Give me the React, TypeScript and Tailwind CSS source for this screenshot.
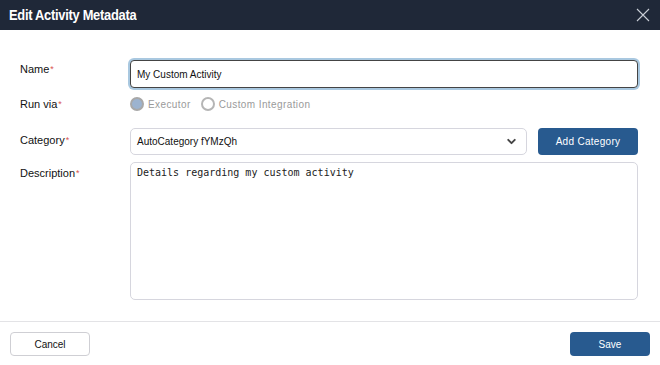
import { ChevronDown } from "lucide-react";

function Label({ text, className = "" }: { text: string; className?: string }) {
  return (
    <div className={`w-[110px] shrink-0 text-[11px] leading-[14px] text-[#111] ${className}`}>
      {text}
      <span className="text-[#d9534f] text-[9px] align-top ml-[1px]">*</span>
    </div>
  );
}

export default function App() {
  return (
    <div
      className="w-[660px] h-[365px] bg-white flex flex-col overflow-hidden"
      style={{ fontFamily: '"Liberation Sans", Arial, sans-serif' }}
    >
      <div className="h-[30px] shrink-0 bg-[#1f2838] flex items-center justify-between pl-[9px] pr-[10px]">
        <h1 className="text-white text-[14px] font-bold tracking-[-0.3px] scale-x-[0.92] origin-left">
          Edit Activity Metadata
        </h1>
        <svg width="14" height="14" viewBox="0 0 14 14" className="text-[#c9ced6]">
          <path d="M1 1L13 13M13 1L1 13" stroke="currentColor" strokeWidth="1.1" fill="none" />
        </svg>
      </div>

      <div className="flex-1 flex flex-col pl-[20px] pr-[22px] pt-[30px]">
        <div className="flex items-start">
          <Label text="Name" className="pt-[2px]" />
          <div className="flex-1 rounded-[6px] p-[2px] bg-[#a9c8e0] -m-[2px]">
            <input
              className="w-full h-[28px] rounded-[4px] border border-[#444] bg-white px-[6px] text-[10px] text-[#111] outline-none"
              defaultValue="My Custom Activity"
              spellCheck={false}
            />
          </div>
        </div>

        <div className="flex items-center mt-[9px] h-[14px]">
          <Label text="Run via" />
          <div className="flex items-center text-[10px] text-[#9a9a9a] tracking-[0.4px]">
            <span className="w-[14px] h-[14px] rounded-full bg-[#9cb3cf] border-[2px] border-[#a8a8a8] mr-[4px]" />
            <span>Executor</span>
            <span className="w-[14px] h-[14px] rounded-full bg-white border-[2px] border-[#b5b5b5] ml-[10px] mr-[4px]" />
            <span>Custom Integration</span>
          </div>
        </div>

        <div className="flex items-start mt-[17px]">
          <Label text="Category" className="pt-[5px]" />
          <div className="flex-1 flex items-center gap-[11px]">
            <div className="flex-1 h-[27px] rounded-[5px] border border-[#d6d6de] flex items-center justify-between pl-[6px] pr-[8px]">
              <span className="text-[10px] text-[#111]">AutoCategory fYMzQh</span>
              <ChevronDown className="w-[13px] h-[13px] text-[#444]" strokeWidth={3.5} />
            </div>
            <button className="w-[100px] h-[27px] rounded-[4px] bg-[#285a8f] text-white text-[10px] tracking-[0.3px]">
              Add Category
            </button>
          </div>
        </div>

        <div className="flex items-start mt-[7px]">
          <Label text="Description" className="pt-[4px]" />
          <div
            className="flex-1 h-[138px] rounded-[5px] border border-[#d6d6de] px-[6px] py-[3px] text-[10px] leading-[14px] text-[#222]"
            style={{ fontFamily: '"DejaVu Sans Mono", "Liberation Mono", monospace' }}
          >
            Details regarding my custom activity
          </div>
        </div>
      </div>

      <div className="h-[44px] shrink-0 border-t border-[#e3e3e6] flex items-center justify-between pl-[10px] pr-[10px] pt-[1px]">
        <button className="w-[80px] h-[24px] rounded-[4px] border border-[#cfcfd4] bg-white text-[10px] text-[#111]">
          Cancel
        </button>
        <button className="w-[80px] h-[24px] rounded-[4px] bg-[#285a8f] text-white text-[10px]">
          Save
        </button>
      </div>
    </div>
  );
}
